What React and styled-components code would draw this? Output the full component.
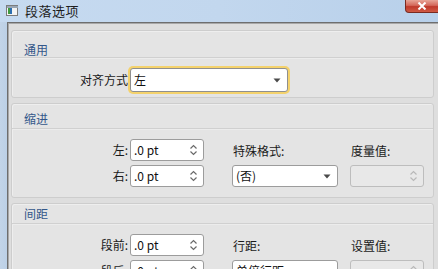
import React from "react";
import styled, { createGlobalStyle } from "styled-components";

const Global = createGlobalStyle`
  html, body { margin: 0; padding: 0; background: #c4d8ee; }
  body { font-family: "Noto Sans CJK SC", "Noto Sans", sans-serif; }
`;

const Window = styled.div`
  width: 438px;
  height: 269px;
  overflow: hidden;
  display: flex;
  flex-direction: column;
  background: linear-gradient(to right, #c6daf0 0%, #c2d7ee 50%, #b8d0ea 100%);
`;

const TitleBar = styled.div`
  height: 22px;
  flex: none;
  display: flex;
  align-items: flex-start;
`;

const AppIcon = styled.svg`
  margin: 5px 0 0 6px;
  flex: none;
`;

const Title = styled.div`
  margin: 2px 0 0 7px;
  font-size: 13px;
  line-height: 17px;
  color: #1e1e1e;
  letter-spacing: 0.5px;
`;

const CloseButton = styled.div`
  margin-left: auto;
  width: 34px;
  height: 13px;
  margin-right: -1px;
  background: linear-gradient(to bottom, #e8a597 0%, #d4685a 45%, #c0392b 55%, #cf5a44 100%);
  border: 1px solid #7a2a20;
  border-top: none;
  border-radius: 0 0 0 4px;
  display: flex;
  align-items: center;
  justify-content: center;
  box-sizing: border-box;
`;

const Body = styled.div`
  flex: 1;
  display: flex;
  min-height: 0;
`;

const SideFrame = styled.div`
  width: 7px;
  flex: none;
  background: linear-gradient(to right, #c2d4e8, #bcd0e6);
`;

const Client = styled.div`
  flex: 1;
  border-top: 1px solid #6e6e6e;
  border-left: 1px solid #6e6e6e;
  box-shadow: inset 1px 1px 0 #a8a8a8;
  background: #dedede;
  padding: 7px 4px 0 3px;
  display: flex;
  flex-direction: column;
  gap: 5px;
`;

const Group = styled.div`
  flex: none;
  border: 1px solid #cdcdcd;
  border-radius: 3px;
  background: #e4e4e4;
  box-shadow: inset 1px 1px 0 #eeeeee;
`;

const GroupHeader = styled.div`
  height: ${(p) => p.$h}px;
  box-sizing: border-box;
  padding: ${(p) => p.$pt}px 0 0 12px;
  font-size: 12px;
  line-height: 16px;
  color: #33578a;
  border-bottom: 1px solid #d0d0d0;
  box-shadow: 0 1px 0 #ececec;
`;

const AlignRow = styled.div`
  display: flex;
  align-items: center;
  padding: 10px 0 5px;
`;

const Label = styled.div`
  font-size: 12px;
  line-height: 16px;
  color: #1a1a1a;
  text-align: right;
  white-space: nowrap;
  padding-right: 2px;
  ${(p) => p.$w && `width: ${p.$w}px; box-sizing: border-box;`}
`;

const TopLabel = styled.div`
  font-size: 12px;
  line-height: 16px;
  color: #1a1a1a;
  align-self: end;
  margin-bottom: 2px;
  padding-left: 1px;
`;

const Field = styled.div`
  box-sizing: border-box;
  width: ${(p) => p.$w}px;
  height: ${(p) => p.$h || 22}px;
  border: 1px solid ${(p) => (p.$disabled ? "#bdbdbd" : "#9c9c9c")};
  border-radius: 3px;
  background: ${(p) => (p.$disabled ? "#e8e8e8" : "#ffffff")};
  display: flex;
  align-items: center;
  padding: 0 6px 0 3px;
  font-size: 12px;
  color: #111;
  font-family: "Noto Sans CJK SC", "Noto Sans", sans-serif;
  ${(p) =>
    p.$focus &&
    `border: 1px solid #8f8f8f; box-shadow: 0 0 0 2px #f4d26c;`}
`;

const FieldText = styled.span`
  flex: 1;
  line-height: 16px;
  white-space: nowrap;
  overflow: hidden;
`;

const Grid = styled.div`
  display: grid;
  grid-template-columns: 118px 102px 118px 74px;
  grid-template-rows: 22px 22px;
  row-gap: 4px;
  padding: 10px 0 10px;
  align-items: center;
`;

const Spin = ({ w = 74, text, disabled }) => (
  <Field $w={w} $disabled={disabled}>
    <FieldText>{text}</FieldText>
    <svg width="7" height="12" viewBox="0 0 7 12">
      <path d="M0.5 4.5 L3.5 1.5 L6.5 4.5" fill="none" stroke={disabled ? "#b8b8b8" : "#6a6a6a"} strokeWidth="1.2" />
      <path d="M0.5 7.5 L3.5 10.5 L6.5 7.5" fill="none" stroke={disabled ? "#b8b8b8" : "#6a6a6a"} strokeWidth="1.2" />
    </svg>
  </Field>
);

const Combo = ({ w, h, text, focus }) => (
  <Field $w={w} $h={h} $focus={focus}>
    <FieldText>{text}</FieldText>
    <svg width="8" height="5" viewBox="0 0 8 5">
      <path d="M0.5 0.5 H7.5 L4 4.5 Z" fill="#4a4a4a" />
    </svg>
  </Field>
);

export default function App() {
  return (
    <>
      <Global />
      <Window>
        <TitleBar>
          <AppIcon width="12" height="11" viewBox="0 0 12 11">
            <rect x="0.5" y="0.5" width="11" height="10" fill="#f4f4f4" stroke="#7c7c7c" />
            <rect x="1" y="1" width="11" height="2" fill="#9aa6b4" />
            <rect x="2" y="3" width="2" height="6" fill="#3f9a3f" />
            <rect x="4" y="3" width="2" height="6" fill="#2e6fb0" />
          </AppIcon>
          <Title>段落选项</Title>
          <CloseButton>
            <svg width="10" height="8" viewBox="0 0 10 8">
              <path d="M1.5 0.5 L8.5 7.5 M8.5 0.5 L1.5 7.5" stroke="#ffffff" strokeWidth="2" />
            </svg>
          </CloseButton>
        </TitleBar>
        <Body>
          <SideFrame />
          <Client>
            <Group>
              <GroupHeader $h={27} $pt={11}>通用</GroupHeader>
              <AlignRow>
                <Label $w={118}>对齐方式</Label>
                <Combo w={158} h={24} text="左" focus />
              </AlignRow>
            </Group>
            <Group>
              <GroupHeader $h={25} $pt={7}>缩进</GroupHeader>
              <Grid>
                <Label>左:</Label>
                <Spin text=".0 pt" />
                <TopLabel>特殊格式:</TopLabel>
                <TopLabel>度量值:</TopLabel>
                <Label>右:</Label>
                <Spin text=".0 pt" />
                <Combo w={106} text="(否)" />
                <Spin text="" disabled />
              </Grid>
            </Group>
            <Group>
              <GroupHeader $h={20} $pt={2}>间距</GroupHeader>
              <Grid>
                <Label>段前:</Label>
                <Spin text=".0 pt" />
                <TopLabel>行距:</TopLabel>
                <TopLabel>设置值:</TopLabel>
                <Label>段后:</Label>
                <Spin text=".0 pt" />
                <Combo w={106} text="单倍行距" />
                <Spin text="" disabled />
              </Grid>
            </Group>
          </Client>
        </Body>
      </Window>
    </>
  );
}
